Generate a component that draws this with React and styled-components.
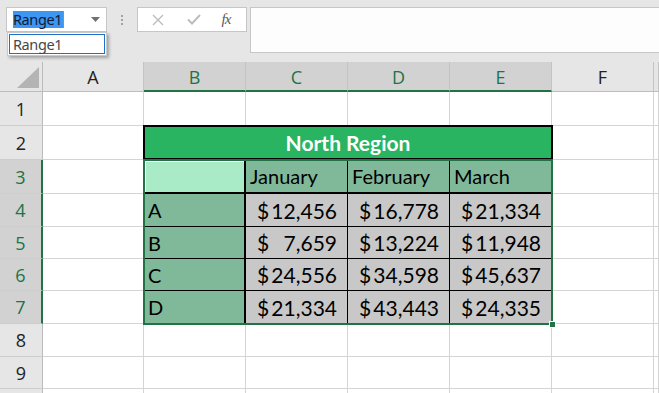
import React from "react";
import styled, { createGlobalStyle, css } from "styled-components";

const GlobalStyle = createGlobalStyle`
  html, body { margin: 0; padding: 0; background: #e6e6e6; overflow: hidden; }
  body { font-family: "Open Sans", "Noto Sans", sans-serif; }
  * { box-sizing: border-box; }
`;

const place = css`
  grid-row: ${(p) => p.$r};
  grid-column: ${(p) => p.$c} / span ${(p) => p.$span || 1};
`;

const Frame = styled.div`
  width: 659px;
  height: 393px;
  overflow: hidden;
  display: flex;
  flex-direction: column;
  background: #e6e6e6;
`;

const TopBar = styled.div`
  height: 62px;
  flex: none;
  display: flex;
  align-items: flex-start;
  padding: 7px 0 0 6px;
  background: #e6e6e6;
`;

const NameBox = styled.div`
  position: relative;
  width: 101px;
  height: 25px;
  background: #fff;
  border: 1px solid #c6c6c6;
  display: flex;
  align-items: center;
  padding-left: 6px;
`;

const Selected = styled.span`
  background: #3c96f2;
  color: #0e1a3c;
  font-family: "Noto Sans", sans-serif;
  font-size: 14.5px;
  letter-spacing: -0.4px;
  line-height: 17px;
  padding: 0 1px 0 0;
`;

const Caret = styled.span`
  width: 1px;
  height: 17px;
  background: #e3781c;
`;

const DropArrow = styled.svg`
  margin-left: auto;
  margin-right: 6px;
`;

const Popup = styled.div`
  position: absolute;
  top: 24px;
  left: 0;
  width: 100px;
  height: 24px;
  background: #fff;
  border: 1px solid #c9c9c9;
  box-shadow: 2px 2px 3px rgba(0, 0, 0, 0.3);
  padding: 1px;
  z-index: 5;
`;

const PopupItem = styled.div`
  height: 100%;
  border: 1px solid #1f70c8;
  display: flex;
  align-items: center;
  padding-left: 3px;
  font-family: "Noto Sans", sans-serif;
  font-size: 14.5px;
  letter-spacing: -0.4px;
  color: #474747;
`;

const Grip = styled.div`
  width: 30px;
  height: 25px;
  display: flex;
  flex-direction: column;
  align-items: center;
  justify-content: center;
  gap: 2px;
`;

const Dot = styled.span`
  width: 2px;
  height: 2px;
  background: #a2a2a2;
`;

const FxBox = styled.div`
  width: 110px;
  height: 25px;
  background: #fff;
  border: 1px solid #c6c6c6;
  display: grid;
  grid-template-columns: 36px 36px 1fr;
  align-items: center;
  justify-items: center;
  padding-left: 2px;
`;

const FxText = styled.span`
  font-family: "Liberation Serif", "DejaVu Serif", serif;
  font-style: italic;
  font-size: 15px;
  color: #5a5a5a;
  letter-spacing: -1px;
  margin-right: 6px;
`;

const FormulaInput = styled.div`
  flex: 1;
  margin-left: 3px;
  height: 46px;
  background: #fdfdfd;
  border: 1px solid #c6c6c6;
  border-right: none;
`;

const Sheet = styled.div`
  display: grid;
  grid-template-columns: 43px 101px repeat(5, 102px) 1fr;
  grid-template-rows: 30px 34px 34px 34px 33px 32px 32px 33px 33px 32px 32px;
  background: #fff;
`;

const Corner = styled.div`
  ${place};
  background: #e6e6e6;
  border-right: 1px solid #bcbcbc;
  border-bottom: 1px solid #bcbcbc;
  display: flex;
  align-items: flex-end;
  justify-content: flex-end;
  padding: 0 3px 3px 0;
`;

const ColHeader = styled.div`
  ${place};
  background: ${(p) => (p.$selected ? "#d2d2d2" : "#e6e6e6")};
  color: ${(p) => (p.$selected ? "#217346" : "#222")};
  border-right: 1px solid #c4c4c4;
  border-bottom: ${(p) => (p.$selected ? "2px solid #217346" : "1px solid #bcbcbc")};
  display: flex;
  align-items: center;
  justify-content: center;
  font-size: 18px;
  padding-top: ${(p) => (p.$selected ? "2px" : "1px")};
`;

const RowHeader = styled.div`
  ${place};
  background: ${(p) => (p.$selected ? "#d2d2d2" : "#e6e6e6")};
  color: ${(p) => (p.$selected ? "#217346" : "#222")};
  border-right: ${(p) => (p.$selected ? "2px solid #217346" : "1px solid #bcbcbc")};
  border-bottom: 1px solid #cdcdcd;
  display: flex;
  align-items: center;
  justify-content: center;
  font-size: 18px;
`;

const Cell = styled.div`
  ${place};
  border-right: 1px solid #d4d4d4;
  border-bottom: 1px solid #d4d4d4;
`;

const TitleCell = styled.div`
  ${place};
  position: relative;
  z-index: 1;
  margin: -1px -1px 0 -1px;
  background: #29b462;
  border: 2px solid #000;
  color: #fff;
  font-family: "Lato", sans-serif;
  font-weight: 700;
  font-size: 21px;
  display: flex;
  align-items: center;
  justify-content: center;
`;

const DataCell = styled.div`
  ${place};
  background: ${(p) => p.$bg};
  border-right: ${(p) => p.$right}px solid #000;
  border-bottom: ${(p) => p.$bottom}px solid #000;
  box-shadow: ${(p) => (p.$active ? "inset 2px 2px 0 #fff" : "none")};
  font-family: "Lato", sans-serif;
  color: #000;
  display: flex;
  align-items: center;
  justify-content: ${(p) => (p.$money ? "space-between" : "flex-start")};
  padding: ${(p) => (p.$money ? "0 10px 0 11px" : "0 0 0 4px")};
  font-size: ${(p) => (p.$money ? "21px" : "20px")};
  white-space: pre;
`;

const SelectionBox = styled.div`
  grid-column: 3 / 7;
  grid-row: 4 / 9;
  margin: -1px;
  border: 2px solid #217346;
  position: relative;
  z-index: 2;
  pointer-events: none;
`;

const FillHandle = styled.span`
  position: absolute;
  right: -5px;
  bottom: -5px;
  width: 7px;
  height: 7px;
  background: #217346;
  border: 1px solid #fff;
`;

const columns = ["A", "B", "C", "D", "E", "F", ""];
const ROWS = 10;

const tableRows = {
  3: ["", "January", "February", "March"],
  4: ["A", "12,456", "16,778", "21,334"],
  5: ["B", "7,659", "13,224", "11,948"],
  6: ["C", "24,556", "34,598", "45,637"],
  7: ["D", "21,334", "43,443", "24,335"],
};

function renderRow(r) {
  const gr = r + 1;
  const out = [
    <RowHeader key={`h${r}`} $r={gr} $c={1} $selected={r >= 3 && r <= 7}>
      {r < 10 ? r : ""}
    </RowHeader>,
  ];
  if (r === 2) {
    out.push(<Cell key="a" $r={gr} $c={2} />);
    out.push(
      <TitleCell key="t" $r={gr} $c={3} $span={4}>
        North Region
      </TitleCell>
    );
    out.push(<Cell key="f" $r={gr} $c={7} />);
    out.push(<Cell key="g" $r={gr} $c={8} />);
    return out;
  }
  const data = tableRows[r];
  columns.forEach((c, ci) => {
    const gc = ci + 2;
    if (data && ci >= 1 && ci <= 4) {
      const v = data[ci - 1];
      const isLabelCol = ci === 1;
      const isHead = r === 3;
      let bg = "#c8c8c8";
      if (isLabelCol) bg = isHead ? "#aaebc7" : "#80b99a";
      else if (isHead) bg = "#80b99a";
      const money = !isHead && !isLabelCol;
      out.push(
        <DataCell
          key={`d${ci}`}
          $r={gr}
          $c={gc}
          $bg={bg}
          $right={ci === 1 ? 2 : 1}
          $bottom={r === 3 ? 2 : 1}
          $money={money}
          $active={r === 3 && ci === 1}
        >
          {money ? (
            <>
              <span>$</span>
              <span>{v}</span>
            </>
          ) : (
            v
          )}
        </DataCell>
      );
    } else {
      out.push(<Cell key={`e${ci}`} $r={gr} $c={gc} />);
    }
  });
  return out;
}

export default function App() {
  return (
    <>
      <GlobalStyle />
      <Frame>
        <TopBar>
          <NameBox>
            <Selected>Range1</Selected>
            <Caret />
            <DropArrow width="9" height="5" viewBox="0 0 9 5">
              <polygon points="0,0 9,0 4.5,5" fill="#707070" />
            </DropArrow>
            <Popup>
              <PopupItem>Range1</PopupItem>
            </Popup>
          </NameBox>
          <Grip>
            <Dot />
            <Dot />
            <Dot />
          </Grip>
          <FxBox>
            <svg width="12" height="12" viewBox="0 0 12 12">
              <path d="M1 1 L11 11 M11 1 L1 11" stroke="#bdbdbd" strokeWidth="1.4" />
            </svg>
            <svg width="14" height="11" viewBox="0 0 14 11">
              <path d="M1 5.5 L5 9.5 L13 1" stroke="#bdbdbd" strokeWidth="2" fill="none" />
            </svg>
            <FxText>fx</FxText>
          </FxBox>
          <FormulaInput />
        </TopBar>
        <Sheet>
          <Corner $r={1} $c={1}>
            <svg width="22" height="21" viewBox="0 0 22 21">
              <polygon points="22,0 22,21 0,21" fill="#b4b4b4" />
            </svg>
          </Corner>
          {columns.map((c, i) => (
            <ColHeader key={`c${i}`} $r={1} $c={i + 2} $selected={i >= 1 && i <= 4}>
              {c}
            </ColHeader>
          ))}
          {Array.from({ length: ROWS }, (_, i) => renderRow(i + 1))}
          <SelectionBox>
            <FillHandle />
          </SelectionBox>
        </Sheet>
      </Frame>
    </>
  );
}
